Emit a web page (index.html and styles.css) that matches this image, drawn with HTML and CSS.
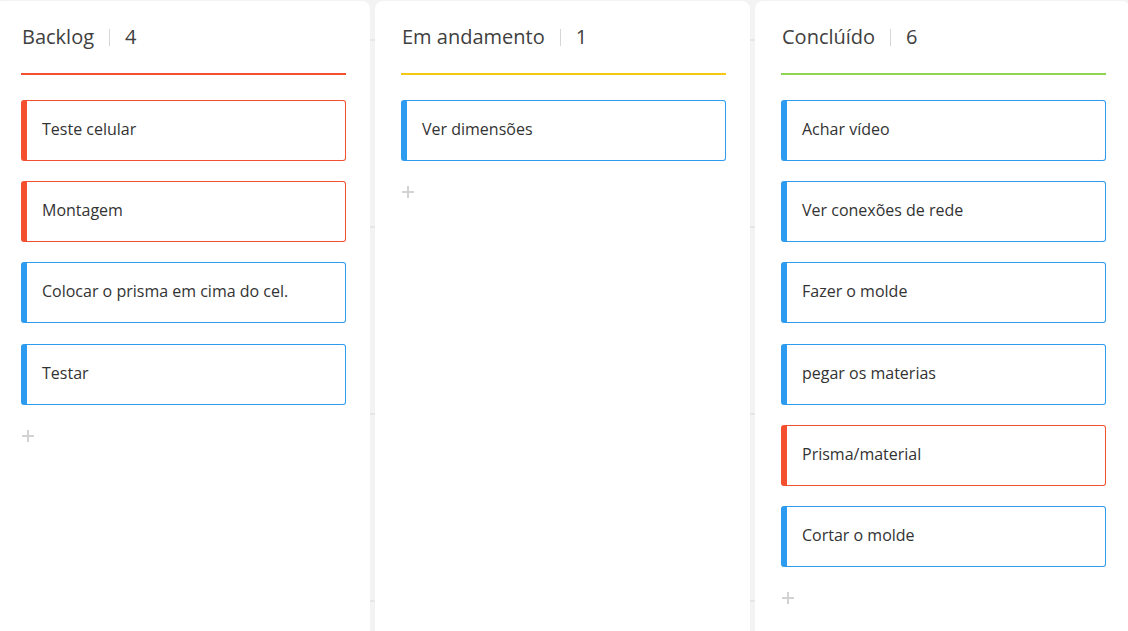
FILE: index.html
```html
<!DOCTYPE html>
<html lang="pt">
<head>
<meta charset="utf-8">
<title>Quadro</title>
<link rel="stylesheet" href="styles.css">
</head>
<body>
<div class="board">
  <section class="column">
    <header class="col-head">
      <span class="col-title">Backlog</span><span class="sep"></span><span class="count">4</span>
    </header>
    <div class="rule rule-red"></div>
    <div class="cards">
      <div class="card card-red">Teste celular</div>
      <div class="card card-red">Montagem</div>
      <div class="card card-blue">Colocar o prisma em cima do cel.</div>
      <div class="card card-blue">Testar</div>
    </div>
    <div class="add"><span class="plus"></span></div>
  </section>
  <section class="column">
    <header class="col-head">
      <span class="col-title">Em andamento</span><span class="sep"></span><span class="count">1</span>
    </header>
    <div class="rule rule-yellow"></div>
    <div class="cards">
      <div class="card card-blue">Ver dimensões</div>
    </div>
    <div class="add"><span class="plus"></span></div>
  </section>
  <section class="column">
    <header class="col-head">
      <span class="col-title">Conclúído</span><span class="sep"></span><span class="count">6</span>
    </header>
    <div class="rule rule-green"></div>
    <div class="cards">
      <div class="card card-blue">Achar vídeo</div>
      <div class="card card-blue">Ver conexões de rede</div>
      <div class="card card-blue">Fazer o molde</div>
      <div class="card card-blue">pegar os materias</div>
      <div class="card card-red">Prisma/material</div>
      <div class="card card-blue">Cortar o molde</div>
    </div>
    <div class="add"><span class="plus"></span></div>
  </section>
</div>
</body>
</html>
```

FILE: styles.css
```css
* { box-sizing: border-box; }

html, body {
  margin: 0;
  padding: 0;
  height: 100%;
  overflow: hidden;
}

body {
  background-color: #f3f3f3;
  background-image: repeating-linear-gradient(
    to bottom,
    transparent 0,
    transparent 39px,
    #e6e6e6 39px,
    #e6e6e6 41px,
    transparent 41px,
    transparent 187px
  );
  font-family: "Open Sans", "Noto Sans", sans-serif;
  color: #333;
}

.board {
  display: flex;
  gap: 5px;
  margin-left: -5px;
  padding-top: 1px;
  height: 100%;
}

.column {
  flex: 0 0 375px;
  background: #fff;
  border-radius: 8px 8px 0 0;
  padding: 0 24px 0 26px;
  min-height: 700px;
}

.col-head {
  display: flex;
  align-items: center;
  height: 72px;
  padding-left: 1px;
  font-size: 20px;
  line-height: 28px;
  color: #404040;
}

.sep {
  display: inline-block;
  width: 1px;
  height: 17px;
  background: #d6d6d6;
  margin: 0 15px 0 15px;
}

.count { color: #404040; }

.rule {
  height: 2px;
  margin-bottom: 25px;
}
.rule-red { background: #f4502f; }
.rule-yellow { background: #f6c90e; }
.rule-green { background: #8ed453; }

.cards {
  display: flex;
  flex-direction: column;
  gap: 20.2px;
}

.card {
  height: 61px;
  display: flex;
  align-items: center;
  padding: 0 0 3px 15px;
  font-size: 16px;
  color: #333;
  border: 1px solid;
  border-left-width: 6px;
  border-radius: 3px;
  background: #fff;
}
.card-red { border-color: #f4502f; }
.card-blue { border-color: #2d9cf0; }

.add {
  padding: 25px 0 0 1px;
}

.plus {
  display: block;
  position: relative;
  width: 12px;
  height: 12px;
}
.plus::before,
.plus::after {
  content: "";
  position: absolute;
  background: #d2d2d2;
}
.plus::before {
  left: 5px;
  top: 0;
  width: 2px;
  height: 12px;
}
.plus::after {
  top: 5px;
  left: 0;
  width: 12px;
  height: 2px;
}
```
